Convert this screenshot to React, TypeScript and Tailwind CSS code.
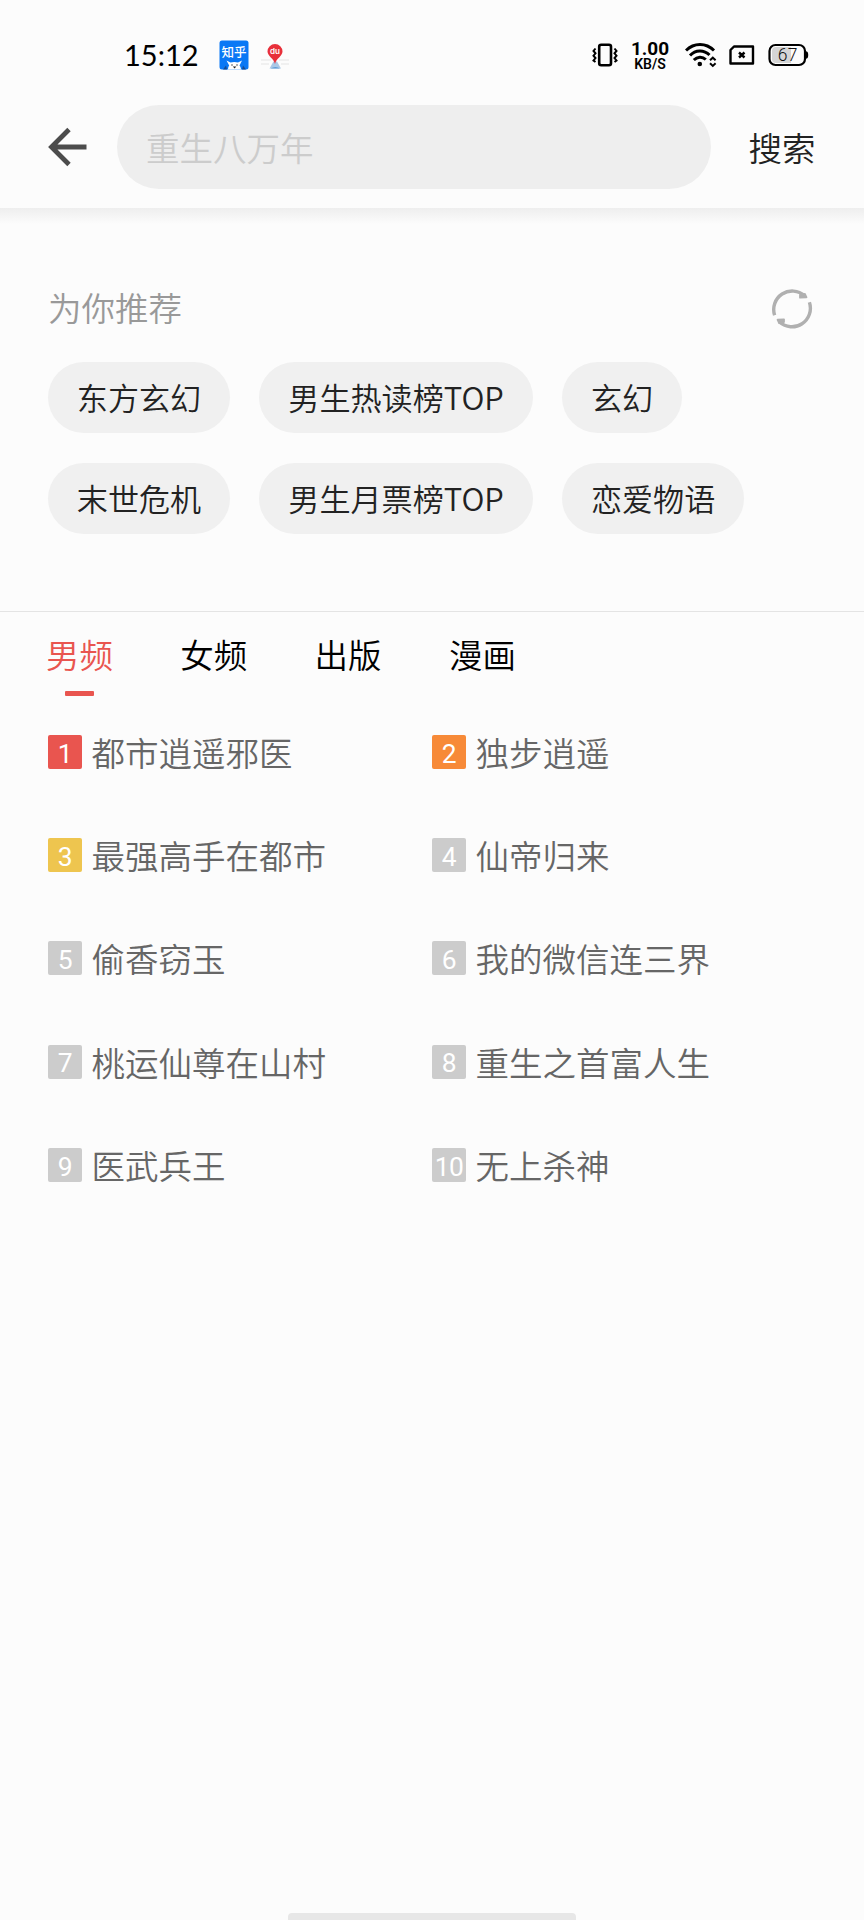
import { useState } from 'react';

const recommended = [
  ['东方玄幻', '男生热读榜TOP', '玄幻'],
  ['末世危机', '男生月票榜TOP', '恋爱物语']
];

const tabs = ['男频', '女频', '出版', '漫画'];

const books = [
  { title: '都市逍遥邪医', color: 'bg-[#e9554f]' },
  { title: '独步逍遥', color: 'bg-[#f78a38]' },
  { title: '最强高手在都市', color: 'bg-[#eec54f]' },
  { title: '仙帝归来', color: 'bg-[#cccccc]' },
  { title: '偷香窃玉', color: 'bg-[#cccccc]' },
  { title: '我的微信连三界', color: 'bg-[#cccccc]' },
  { title: '桃运仙尊在山村', color: 'bg-[#cccccc]' },
  { title: '重生之首富人生', color: 'bg-[#cccccc]' },
  { title: '医武兵王', color: 'bg-[#cccccc]' },
  { title: '无上杀神', color: 'bg-[#cccccc]' }
];

function ZhihuIcon() {
  return (
    <svg width="30" height="30" viewBox="0 0 30 30" className="ml-[21px]">
      <rect x="0.5" y="0.5" width="29" height="29" rx="2.5" fill="#0a78f5" />
      <text x="15" y="16.5" textAnchor="middle" fontSize="12.5" fontWeight="500" fill="#fff" fontFamily="Noto Sans CJK SC, sans-serif">知乎</text>
      <path d="M9 29.500c0-2 .5-3 1.200-4L7.500 20.500l4 2c2.500-.8 5-.8 7.500 0l4-2-2.500 5c.8 1 1.500 2 1.500 4z" fill="#fff" />
      <circle cx="13" cy="25" r="0.7" fill="#222" />
      <circle cx="18" cy="25" r="0.7" fill="#222" />
      <path d="M13.800 26.500h3.500l-1.700 2z" fill="#222" />
      <path d="M4 29.500l3-4 1 4zM23 29.500l1-4 3 4z" fill="#174a91" />
    </svg>
  );
}

function MapPinIcon() {
  return (
    <svg width="30" height="30" viewBox="0 0 30 30" className="ml-[11px]">
      <path d="M1 20h10M1 24h8M19 20h10M21 24h8" stroke="#ececec" strokeWidth="1.500" />
      <path d="M9.500 28.500l4-7h3.500l4 7z" fill="#a9c8e6" />
      <path d="M10.500 28.500q5-3 9.500 0z" fill="#5e9bd6" />
      <path d="M15 24c-1.200-5.500-7.500-8-7.500-12.500a7.500 7.500 0 0 1 15 0c0 4.500-6.300 7-7.500 12.500z" fill="#e8303a" />
      <text x="15" y="14" textAnchor="middle" fontSize="8" fontWeight="600" fill="#fff" fontFamily="Inter, sans-serif">du</text>
    </svg>
  );
}

function VibrateIcon() {
  return (
    <svg width="26" height="24" viewBox="0 0 26 24" fill="none" stroke="#000">
      <rect x="7.200" y="1.800" width="11.800" height="20.500" rx="2" strokeWidth="2.600" />
      <path d="M3.500 5.500L1.500 8l2 2.300-2 2.400 2 2.300-2 2.500 2 1.500M22.500 5.500l2 2.500-2 2.300 2 2.400-2 2.300 2 2.500-2 1.500" strokeWidth="2" />
    </svg>
  );
}

function WifiIcon() {
  return (
    <svg width="32" height="26" viewBox="0 0 32 26" fill="none" stroke="#000" strokeWidth="3">
      <path d="M1 8.500C9 .5 21 .5 29 8.500" />
      <path d="M5 13.500c5.500-6 14-6 19.500-.5" />
      <path d="M8.800 18c3.500-3.500 8.500-3.700 12-.5" />
      <circle cx="14.800" cy="22" r="2.300" fill="#000" stroke="none" />
      <path d="M25 18.300l2.800-2.600 2.800 2.600M25 21.300l2.800 2.600 2.800-2.600" strokeWidth="2" />
    </svg>
  );
}

function SimIcon() {
  return (
    <svg width="26" height="20" viewBox="0 0 26 20" fill="none" stroke="#000">
      <path d="M5 1.500H24v17H1.500V5z" strokeWidth="2.400" strokeLinejoin="round" />
      <path d="M10 7.500l5.500 5M15.500 7.500l-5.500 5" strokeWidth="2.400" />
    </svg>
  );
}

function BatteryIcon() {
  return (
    <svg width="41" height="24" viewBox="0 0 41 24">
      <path d="M4 12V8q0-4 4-4h15v16H8q-4 0-4-4z" fill="#d5d5d5" />
      <rect x="1.500" y="2" width="35.500" height="20" rx="6" fill="none" stroke="#000" strokeWidth="2.200" />
      <path d="M37 8c2.800.5 3.200 1.500 3.200 4s-.4 3.500-3.200 4z" fill="#000" />
      <text x="19.800" y="18" textAnchor="middle" fontSize="17.500" letterSpacing="0.3" fill="#111" fontFamily="Roboto, sans-serif" fontWeight="300">67</text>
    </svg>
  );
}

function BackIcon() {
  return (
    <svg width="39" height="40" viewBox="0 0 39 40" fill="none" stroke="#4c4c4c" strokeWidth="4.800">
      <path d="M21 2.500L3.500 20 21 37.500M4 20h34.500" />
    </svg>
  );
}

function RefreshIcon() {
  return (
    <svg width="42" height="42" viewBox="0 0 42 42" fill="none" stroke="#b0b0b0" strokeWidth="3.400">
      <path d="M3.600 27.200A18.500 18.500 0 0 1 33.500 7.700" />
      <path d="M38.400 14.300A18.500 18.500 0 0 1 8.500 34" />
      <path d="M29 7l5-1 1.500 3.300-6.500.3zM13 34l-5 1-1.500-3.300 6.500-.3z" fill="#b0b0b0" strokeWidth="1.800" strokeLinejoin="round" />
    </svg>
  );
}

function App() {
  const [activeTab, setActiveTab] = useState('男频');

  return (
    <div className="flex h-[1920px] w-[864px] flex-col overflow-hidden bg-[#fcfcfc] font-['Noto_Sans_CJK_SC',sans-serif] text-[33.500px] leading-none font-[350]">
      {/* Header */}
      <header className="h-[208px] shrink-0">
        <div className="flex h-[105px] items-center pt-[5px] pl-[124px]">
          <span className="w-[74px] pb-[1px] whitespace-nowrap font-['Lato',sans-serif] text-[29px] font-normal">15:12</span>
          <ZhihuIcon />
          <MapPinIcon />
          <div className="ml-[302px] flex items-center">
            <VibrateIcon />
            <div className="ml-[12px] flex w-[40px] flex-col items-center font-['Roboto',sans-serif]">
              <span className="text-[19px] leading-[17px] font-bold">1.00</span>
              <span className="text-[14px] leading-[14px] font-semibold">KB/S</span>
            </div>
            <div className="ml-[15px]"><WifiIcon /></div>
            <div className="ml-[12px]"><SimIcon /></div>
            <div className="ml-[13px]"><BatteryIcon /></div>
          </div>
        </div>
        <div className="flex h-[84px] items-center pl-[48px]">
          <button><BackIcon /></button>
          <div className="ml-[30px] flex h-[84px] w-[593.500px] items-center rounded-full bg-[#eeeeee] pb-[1px] pl-[29px] text-[#cccccc]">
            重生八万年
          </div>
          <button className="ml-[38px] text-[#222222]">搜索</button>
        </div>
      </header>
      <div className="h-[16px] shrink-0 bg-linear-to-b from-[#eeeeee] to-[#fcfcfc]"></div>

      {/* Recommended tags */}
      <section className="h-[388px] shrink-0 border-b border-[#e4e4e4] px-[48px] pt-[64px]">
        <div className="flex h-[42px] items-center justify-between pr-[3px]">
          <h2 className="pb-[4px] text-[#999999]">为你推荐</h2>
          <button><RefreshIcon /></button>
        </div>
        <div className="mt-[31.500px] flex flex-col gap-[29.500px]">
          {recommended.map((row, i) => (
            <div key={i} className="flex gap-[29.500px]">
              {row.map((tag) => (
                <button key={tag} className="flex h-[71.500px] items-center rounded-full bg-[#f0f0f0] px-[28.800px] pb-[1px] text-[31.100px] text-[#222222]">
                  {tag}
                </button>
              ))}
            </div>
          ))}
        </div>
      </section>

      {/* Ranking */}
      <nav className="flex h-[85px] shrink-0 gap-[67.300px] pt-[25px] pl-[46px]">
        {tabs.map((tab) => (
          <button
            key={tab}
            onClick={() => setActiveTab(tab)}
            className={`flex flex-col items-center ${tab === activeTab ? 'text-[#e9554f]' : 'text-black'}`}
          >
            <span>{tab}</span>
            {tab === activeTab && <span className="mt-[20px] h-[5px] w-[29px] rounded-[1px] bg-[#e9554f]"></span>}
          </button>
        ))}
      </nav>
      <ol className="grid grid-cols-[384px_384px] pt-[38px] pl-[48px]">
        {books.map((book, i) => (
          <li key={book.title} className="flex h-[103.200px] items-start">
            <span className={`flex size-[34px] items-center justify-center rounded-[2px] pt-[4px] font-['Roboto',sans-serif] text-[26.400px] font-normal tracking-[-0.5px] text-white ${book.color}`}>
              {i + 1}
            </span>
            <span className="ml-[9.500px] text-[#666666]">{book.title}</span>
          </li>
        ))}
      </ol>

      {/* Gesture bar */}
      <div className="mt-auto h-[7px] w-[288px] shrink-0 self-center rounded-t-[4px] bg-[#e7e7e7]"></div>
    </div>
  );
}

export default App;
